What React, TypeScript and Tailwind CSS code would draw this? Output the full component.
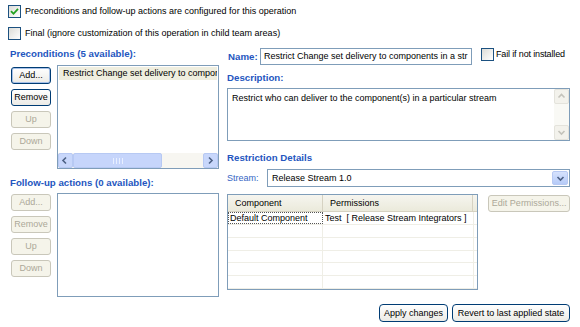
import React from 'react';

const labelBlue = 'text-[#2456c0] text-[9.7px]';

const Check: React.FC<{ checked?: boolean }> = ({ checked }) => (
  <div className="flex h-[13px] w-[13px] shrink-0 items-center justify-center border border-[#1c5180] bg-gradient-to-br from-[#dcdcd7] to-white">
    {checked && (
      <svg width="9" height="9" viewBox="0 0 9 9">
        <path d="M1 4.2 L3.5 6.8 L8 1.8" fill="none" stroke="#21a121" strokeWidth="1.8" />
      </svg>
    )}
  </div>
);

const Btn: React.FC<{ label: string; disabled?: boolean; className?: string }> = ({ label, disabled, className = '' }) => (
  <div
    className={`flex h-[17px] items-center justify-center whitespace-nowrap rounded-[3px] border ${
      disabled
        ? 'border-[#c9c7ba] bg-[#f5f4ea] text-[#aca899]'
        : 'border-[#003c74] bg-gradient-to-b from-white to-[#ecebe6] text-black'
    } ${className}`}
  >
    {label}
  </div>
);

const ButtonColumn: React.FC<{ disabled?: boolean; first?: boolean }> = ({ disabled, first }) => (
  <div className="ml-[1px] mt-[2px] flex w-[40px] flex-col gap-[5px]">
    <Btn label="Add..." disabled={disabled} className={first ? 'shadow-[inset_0_0_0_1px_#a6c0e8]' : ''} />
    <Btn label="Remove" disabled={disabled} />
    <Btn label="Up" disabled />
    <Btn label="Down" disabled />
  </div>
);

const Arrow: React.FC<{ dir: 'left' | 'right' | 'up' | 'down'; color?: string }> = ({ dir, color = '#4d6185' }) => {
  const d = {
    left: 'M5 1.5 L2 4.5 L5 7.5',
    right: 'M3 1.5 L6 4.5 L3 7.5',
    up: 'M1.5 5.5 L4.5 2.5 L7.5 5.5',
    down: 'M1.5 3 L4.5 6 L7.5 3',
  }[dir];
  return (
    <svg width="9" height="9" viewBox="0 0 9 9">
      <path d={d} fill="none" stroke={color} strokeWidth="1.6" />
    </svg>
  );
};

const App: React.FC = () => {
  return (
    <div className="h-[327px] w-[580px] overflow-hidden bg-white font-['Liberation_Sans',Arial,sans-serif] text-[9px] leading-[13px] text-black">
      {/* Top options */}
      <div className="pl-[8px] pt-[5px]">
        <div className="flex h-[13px] items-center gap-[4px]">
          <Check checked />
          <span>Preconditions and follow-up actions are configured for this operation</span>
        </div>
        <div className="mt-[9px] flex h-[13px] items-center gap-[4px]">
          <Check />
          <span>Final (ignore customization of this operation in child team areas)</span>
        </div>
      </div>

      <div className="mt-[6px] flex pl-[10px]">
        {/* Left column */}
        <div className="w-[210px]">
          <div className={`mt-[1px] h-[14px] font-bold ${labelBlue}`}>Preconditions (5 available):</div>
          <div className="mt-[4px] flex">
            <ButtonColumn first />
            <div className="ml-[6px] flex h-[104px] w-[162px] flex-col border border-[#7f9db9]">
              <div className="flex-1 p-[1px]">
                <div className="h-[13px] overflow-hidden whitespace-nowrap bg-[#efeedf] pl-[4px]">
                  Restrict Change set delivery to compon
                </div>
              </div>
              <div className="flex h-[15px] bg-[#f7f6f1]">
                <div className="flex w-[15px] items-center justify-center rounded-[2px] border border-[#b7c9f3] bg-[#c8d7fb]">
                  <Arrow dir="left" />
                </div>
                <div className="flex w-[89px] items-center justify-center gap-[2px] rounded-[2px] border border-[#b7c9f3] bg-[#c6d5fb]">
                  <div className="h-[6px] w-px bg-[#e8efff]" />
                  <div className="h-[6px] w-px bg-[#e8efff]" />
                  <div className="h-[6px] w-px bg-[#e8efff]" />
                  <div className="h-[6px] w-px bg-[#e8efff]" />
                </div>
                <div className="flex-1" />
                <div className="flex w-[15px] items-center justify-center rounded-[2px] border border-[#b7c9f3] bg-[#c8d7fb]">
                  <Arrow dir="right" />
                </div>
              </div>
            </div>
          </div>

          <div className={`mt-[7px] h-[14px] font-bold ${labelBlue}`}>Follow-up actions (0 available):</div>
          <div className="mt-[3px] flex">
            <div className="-mt-[1px]">
              <ButtonColumn disabled />
            </div>
            <div className="ml-[6px] h-[104px] w-[162px] border border-[#7f9db9]" />
          </div>
        </div>

        {/* Right column */}
        <div className="ml-[7px] w-[343px]">
          <div className="mt-[2px] flex h-[17px] items-center">
            <span className={`w-[33px] pl-[1px] font-bold ${labelBlue}`}>Name:</span>
            <div className="flex h-[17px] w-[212px] items-center overflow-hidden whitespace-nowrap border border-[#7f9db9] pl-[3px]">
              Restrict Change set delivery to components in a str
            </div>
            <div className="ml-[9px] flex items-center gap-[2px] self-start">
              <Check />
              <span className="tracking-[-0.15px]">Fail if not installed</span>
            </div>
          </div>

          <div className={`mt-[6px] h-[14px] font-bold ${labelBlue}`}>Description:</div>
          <div className="mt-[3px] flex h-[53px] border border-[#7f9db9]">
            <div className="flex-1 pl-[4px] pt-[3px]">Restrict who can deliver to the component(s) in a particular stream</div>
            <div className="flex w-[15px] flex-col bg-[#f9f9f5]">
              <div className="flex h-[15px] items-center justify-center rounded-[2px] border border-[#e4e3dc] bg-[#f3f2ec]">
                <Arrow dir="up" color="#c4c3bb" />
              </div>
              <div className="flex-1" />
              <div className="flex h-[15px] items-center justify-center rounded-[2px] border border-[#e4e3dc] bg-[#f3f2ec]">
                <Arrow dir="down" color="#c4c3bb" />
              </div>
            </div>
          </div>

          <div className={`mt-[10px] h-[14px] font-bold ${labelBlue}`}>Restriction Details</div>
          <div className="mt-[4px] flex h-[18px] items-center">
            <span className="w-[40px] text-[#3565c4]">Stream:</span>
            <div className="flex h-[18px] flex-1 items-center border border-[#7f9db9]">
              <span className="flex-1 pl-[4px]">Release Stream 1.0</span>
              <div className="m-[1px] flex h-[14px] w-[16px] items-center justify-center rounded-[2px] border border-[#b7c9f3] bg-gradient-to-b from-[#d6e2fd] to-[#b6cbf8]">
                <Arrow dir="down" />
              </div>
            </div>
          </div>

          <div className="mt-[7px] flex items-start">
            <div className="flex h-[96px] w-[252px] flex-col border border-[#7f9db9]">
              <div className="flex h-[17px] border-b border-[#d6d2c2] bg-gradient-to-b from-[#f6f5ef] to-[#ebeadb]">
                <div className="w-[95px] border-r border-[#d6d2c2] pl-[7px] leading-[16px]">Component</div>
                <div className="w-[150px] border-r border-[#d6d2c2] pl-[7px] leading-[16px]">Permissions</div>
                <div className="flex-1" />
              </div>
              <div className="flex h-[13px] border-b border-[#efeee6]">
                <div className="w-[95px] border border-dotted border-[#555] pl-[1px] leading-[11px]">Default Component</div>
                <div className="w-[151px] whitespace-nowrap border-r border-[#efeee6] pl-[2px]">Test&nbsp;&nbsp;[ Release Stream Integrators ]</div>
              </div>
              {[0, 1, 2, 3, 4].map((i) => (
                <div key={i} className="flex h-[13px] border-b border-[#efeee6]">
                  <div className="w-[95px] border-r border-[#efeee6]" />
                  <div className="w-[151px] border-r border-[#efeee6]" />
                </div>
              ))}
              <div className="flex flex-1">
                <div className="w-[95px] border-r border-[#efeee6]" />
              </div>
            </div>
            <Btn label="Edit Permissions..." disabled className="ml-[10px] mt-[1px] w-[82px]" />
          </div>
        </div>
      </div>

      <div className="mt-[7px] flex justify-end gap-[4px] pr-[10px]">
        <Btn label="Apply changes" className="h-[18px] w-[69px] rounded-[4px]" />
        <Btn label="Revert to last applied state" className="h-[18px] w-[118px] rounded-[4px]" />
      </div>
    </div>
  );
};

export default App;
